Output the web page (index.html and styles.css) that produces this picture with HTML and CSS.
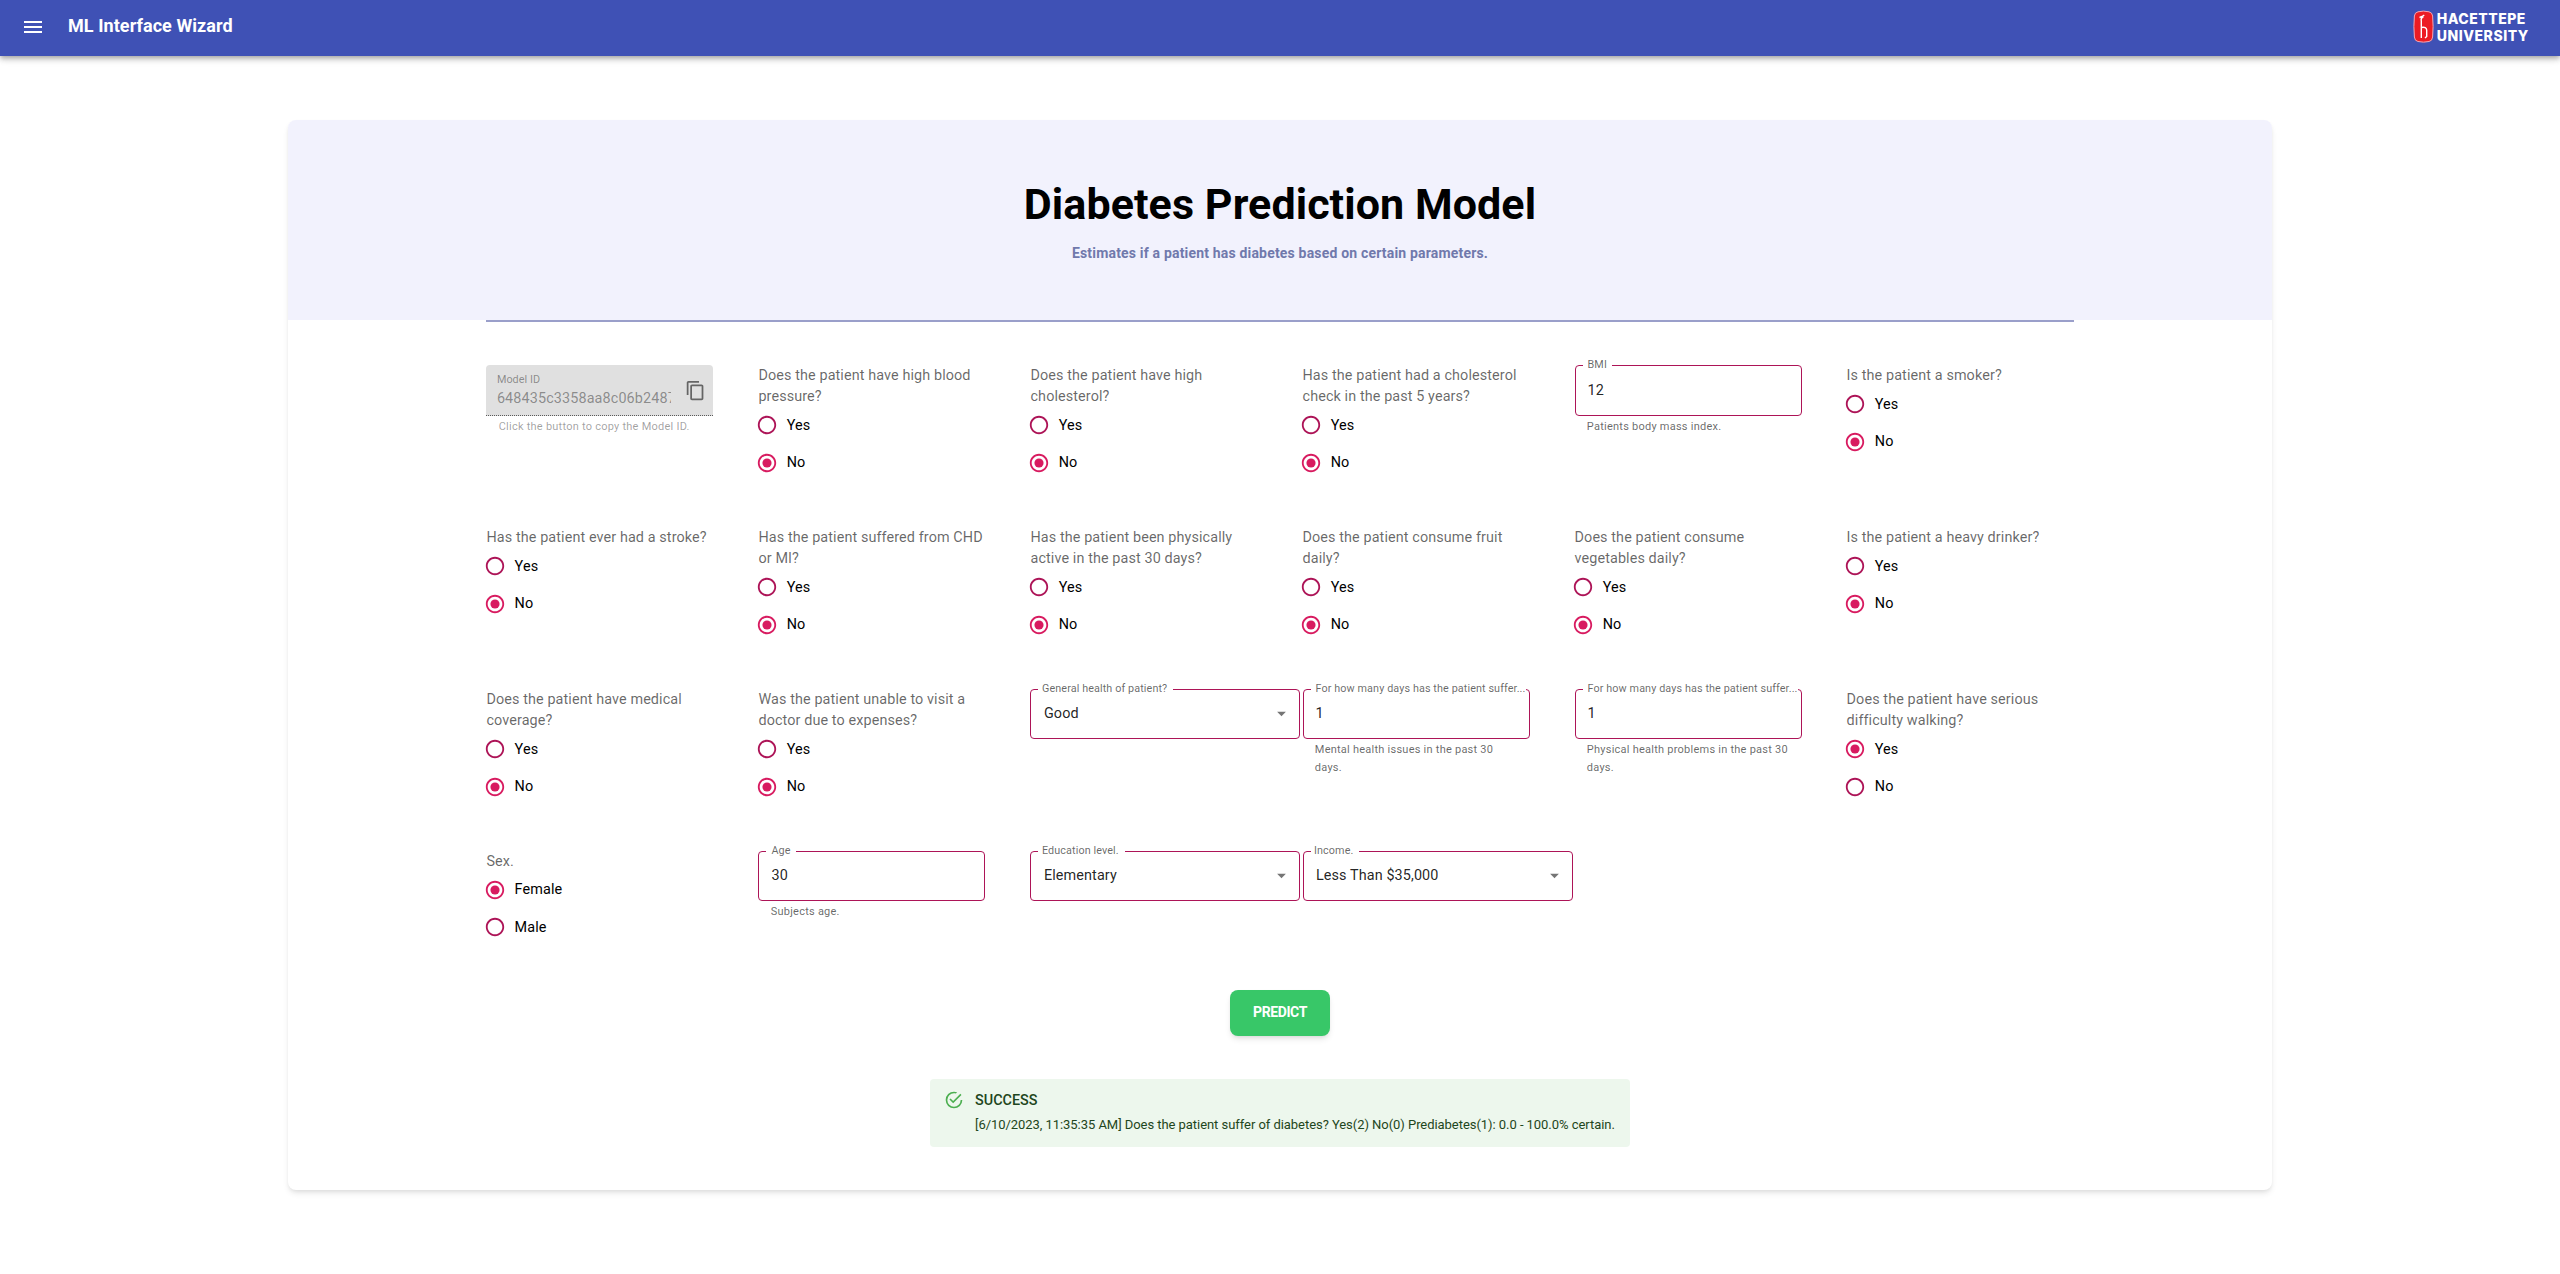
FILE: index.html
```
<!DOCTYPE html>
<html lang="en">
<head>
<meta charset="utf-8">
<title>ML Interface Wizard</title>
<link rel="stylesheet" href="styles.css">
</head>
<body>
<svg class="defs" width="0" height="0">
  <symbol id="radio-off" viewBox="0 0 24 24"><path d="M12 2C6.48 2 2 6.48 2 12s4.48 10 10 10 10-4.48 10-10S17.52 2 12 2zm0 18c-4.42 0-8-3.58-8-8s3.58-8 8-8 8 3.58 8 8-3.58 8-8 8z"/></symbol>
  <symbol id="radio-on" viewBox="0 0 24 24"><path d="M12 2C6.48 2 2 6.48 2 12s4.48 10 10 10 10-4.48 10-10S17.52 2 12 2zm0 18c-4.42 0-8-3.58-8-8s3.58-8 8-8 8 3.58 8 8-3.58 8-8 8z"/><circle cx="12" cy="12" r="5"/></symbol>
  <symbol id="arrow" viewBox="0 0 24 24"><path d="M7 10l5 5 5-5z"/></symbol>
</svg>
<header class="appbar">
  <svg class="menu" viewBox="0 0 24 24"><path d="M3 18h18v-2H3v2zm0-5h18v-2H3v2zm0-7v2h18V6H3z"/></svg>
  <h1 class="brand">ML Interface Wizard</h1>
  <svg class="logo" viewBox="0 0 118 34">
    <path class="badge" d="M5 1.8Q10.500 .4 16 1.800Q19.300 2.500 19.600 6Q20.600 16.500 19.600 27Q19.300 31 16 31.500Q10.500 32.800 5 31.500Q1.700 31 1.400 27Q.4 16.500 1.400 6Q1.700 2.500 5 1.800z"/>
    <path class="deer" d="M6.500 7.500L9 6.500L11.300 5M10.500 6.500Q7.500 8 8.300 11V28M8.300 17.500Q13.500 16.500 13.700 20V26.500L12 28"/>
    <text class="logo-text" x="23.800" y="13.700" textLength="88.500">HACETTEPE</text>
    <text class="logo-text" x="23.800" y="30.700" textLength="91.500">UNIVERSITY</text>
  </svg>
</header>
<main class="card">
  <div class="hero">
    <h2 class="title">Diabetes Prediction Model</h2>
    <p class="subtitle">Estimates if a patient has diabetes based on certain parameters.</p>
  </div>
  <div class="divider"></div>
  <form class="grid">
    <div class="cell">
      <div class="filled">
        <div class="filled-text"><span class="filled-label">Model ID</span><span class="filled-value">648435c3358aa8c06b2487</span></div>
        <svg class="copy" viewBox="0 0 24 24"><path d="M16 1H4c-1.100 0-2 .9-2 2v14h2V3h12V1zm3 4H8c-1.100 0-2 .9-2 2v14c0 1.100.9 2 2 2h11c1.100 0 2-.9 2-2V7c0-1.100-.9-2-2-2zm0 16H8V7h11v14z"/></svg>
      </div>
      <p class="helper muted">Click the button to copy the Model ID.</p>
    </div>
    <div class="cell"><p class="question">Does the patient have high blood pressure?</p><label class="option"><svg><use href="#radio-off"/></svg>Yes</label><label class="option on"><svg><use href="#radio-on"/></svg>No</label></div>
    <div class="cell"><p class="question">Does the patient have high cholesterol?</p><label class="option"><svg><use href="#radio-off"/></svg>Yes</label><label class="option on"><svg><use href="#radio-on"/></svg>No</label></div>
    <div class="cell"><p class="question">Has the patient had a cholesterol check in the past 5 years?</p><label class="option"><svg><use href="#radio-off"/></svg>Yes</label><label class="option on"><svg><use href="#radio-on"/></svg>No</label></div>
    <div class="cell"><div class="field"><span class="legend">BMI</span><span class="value">12</span></div><p class="helper">Patients body mass index.</p></div>
    <div class="cell"><p class="question">Is the patient a smoker?</p><label class="option"><svg><use href="#radio-off"/></svg>Yes</label><label class="option on"><svg><use href="#radio-on"/></svg>No</label></div>

    <div class="cell"><p class="question">Has the patient ever had a stroke?</p><label class="option"><svg><use href="#radio-off"/></svg>Yes</label><label class="option on"><svg><use href="#radio-on"/></svg>No</label></div>
    <div class="cell"><p class="question">Has the patient suffered from CHD or MI?</p><label class="option"><svg><use href="#radio-off"/></svg>Yes</label><label class="option on"><svg><use href="#radio-on"/></svg>No</label></div>
    <div class="cell"><p class="question">Has the patient been physically active in the past 30 days?</p><label class="option"><svg><use href="#radio-off"/></svg>Yes</label><label class="option on"><svg><use href="#radio-on"/></svg>No</label></div>
    <div class="cell"><p class="question">Does the patient consume fruit daily?</p><label class="option"><svg><use href="#radio-off"/></svg>Yes</label><label class="option on"><svg><use href="#radio-on"/></svg>No</label></div>
    <div class="cell"><p class="question">Does the patient consume vegetables daily?</p><label class="option"><svg><use href="#radio-off"/></svg>Yes</label><label class="option on"><svg><use href="#radio-on"/></svg>No</label></div>
    <div class="cell"><p class="question">Is the patient a heavy drinker?</p><label class="option"><svg><use href="#radio-off"/></svg>Yes</label><label class="option on"><svg><use href="#radio-on"/></svg>No</label></div>

    <div class="cell"><p class="question">Does the patient have medical coverage?</p><label class="option"><svg><use href="#radio-off"/></svg>Yes</label><label class="option on"><svg><use href="#radio-on"/></svg>No</label></div>
    <div class="cell"><p class="question">Was the patient unable to visit a doctor due to expenses?</p><label class="option"><svg><use href="#radio-off"/></svg>Yes</label><label class="option on"><svg><use href="#radio-on"/></svg>No</label></div>
    <div class="cell"><div class="field select"><span class="legend">General health of patient?</span><span class="value">Good</span><svg class="caret"><use href="#arrow"/></svg></div></div>
    <div class="cell"><div class="field"><span class="legend long">For how many days has the patient suffer...</span><span class="value">1</span></div><p class="helper">Mental health issues in the past 30 days.</p></div>
    <div class="cell"><div class="field"><span class="legend long">For how many days has the patient suffer...</span><span class="value">1</span></div><p class="helper">Physical health problems in the past 30 days.</p></div>
    <div class="cell"><p class="question">Does the patient have serious difficulty walking?</p><label class="option on"><svg><use href="#radio-on"/></svg>Yes</label><label class="option"><svg><use href="#radio-off"/></svg>No</label></div>

    <div class="cell"><p class="question">Sex.</p><label class="option on"><svg><use href="#radio-on"/></svg>Female</label><label class="option"><svg><use href="#radio-off"/></svg>Male</label></div>
    <div class="cell"><div class="field"><span class="legend">Age</span><span class="value">30</span></div><p class="helper">Subjects age.</p></div>
    <div class="cell"><div class="field select"><span class="legend">Education level.</span><span class="value">Elementary</span><svg class="caret"><use href="#arrow"/></svg></div></div>
    <div class="cell"><div class="field select"><span class="legend">Income.</span><span class="value">Less Than $35,000</span><svg class="caret"><use href="#arrow"/></svg></div></div>
  </form>
  <button class="predict" type="button">PREDICT</button>
  <div class="alert">
    <svg class="alert-icon" viewBox="0 0 24 24"><path d="M20,12A8,8 0 0,1 12,20A8,8 0 0,1 4,12A8,8 0 0,1 12,4C12.760,4 13.500,4.110 14.200,4.310L15.770,2.740C14.610,2.260 13.340,2 12,2A10,10 0 0,0 2,12A10,10 0 0,0 12,22A10,10 0 0,0 22,12M7.910,10.080L6.500,11.500L11,16L21,6L19.590,4.580L11,13.170L7.910,10.080Z"/></svg>
    <div>
      <p class="alert-title">SUCCESS</p>
      <p class="alert-text">[6/10/2023, 11:35:35 AM] Does the patient suffer of diabetes? Yes(2) No(0) Prediabetes(1): 0.0 - 100.0% certain.</p>
    </div>
  </div>
</main>
</body>
</html>
```
FILE: styles.css
```
* { box-sizing: border-box; }
body, h1, h2, p { margin: 0; }
body {
  min-height: 1274px;
  background: #fff;
  font: 14.400px/21px Roboto, sans-serif;
  letter-spacing: .1px;
  color: #000;
}
svg { display: block; fill: currentColor; flex: none; }
.defs { position: absolute; }

.appbar {
  display: flex;
  align-items: center;
  height: 56px;
  padding: 0 29px 2px 20.500px;
  background: #3f51b5;
  color: #fff;
  box-shadow: 0 2px 4px -1px rgba(0,0,0,.2), 0 4px 5px rgba(0,0,0,.14), 0 1px 10px rgba(0,0,0,.12);
}
.menu { width: 24px; height: 24px; }
.brand { margin: 0 auto 3px 23.500px; font-size: 18px; font-weight: 700; letter-spacing: .07px; }
.logo { width: 118px; height: 34px; }
.badge { fill: #ec1c24; stroke: #f4a6b4; stroke-width: 1; }
.deer { fill: none; stroke: #fff; stroke-width: 1.4; }
.logo-text { font: 800 14px Inter, sans-serif; letter-spacing: 0; }

.card {
  display: flex;
  flex-direction: column;
  align-items: center;
  width: 1984px;
  height: 1070px;
  margin: 64px auto 0;
  border-radius: 8px;
  background: #fff;
  box-shadow: 0 4px 6px -1px rgba(0,0,0,.1), 0 2px 4px -1px rgba(0,0,0,.06);
}
.hero {
  width: 100%;
  height: 200px;
  padding-top: 58px;
  border-radius: 8px 8px 0 0;
  background: #f2f2fd;
  text-align: center;
}
.title { font-size: 43px; line-height: 52px; font-weight: 700; letter-spacing: .08px; }
.subtitle { margin-top: 13px; font-size: 14px; font-weight: 700; letter-spacing: .18px; color: #7079ac; }
.divider { width: 1588px; height: 2px; background: #9a9fca; }

.grid {
  display: grid;
  grid-template-columns: repeat(6, minmax(0, 1fr));
  grid-auto-rows: 116.800px;
  gap: 45px;
  width: 1587.200px;
  margin-top: 43.200px;
}
.question { color: rgba(0,0,0,.6); }
.option {
  display: flex;
  align-items: center;
  gap: 8.500px;
  height: 37.500px;
  margin-left: -2.300px;
  position: relative;
  top: -.5px;
}
.option svg { width: 22px; height: 22px; color: #ad1457; }
.option.on svg { color: #d81b60; }

.field {
  position: relative;
  display: flex;
  align-items: center;
  height: 50.400px;
  padding: 0 7px 0 12px;
  border: 1px solid #ad1457;
  border-radius: 4px;
  color: rgba(0,0,0,.87);
}
.select { width: 270px; justify-content: space-between; padding-left: 12.500px; }
.caret { width: 21px; height: 21px; color: rgba(0,0,0,.54); }
/* Label sits over the outline and cuts it */
.legend {
  position: absolute;
  top: -10px;
  left: 7px;
  padding: 0 5px;
  background: #fff;
  font-size: 10.800px;
  line-height: 18px;
  letter-spacing: .1px;
  white-space: nowrap;
  color: rgba(0,0,0,.6);
}
.select .legend { padding: 0 6px 0 3.500px; }
.legend.long { padding-right: 0; }
.helper {
  padding: 2.300px 12px 0 12.300px;
  font-size: 11px;
  line-height: 18px;
  letter-spacing: .24px;
  color: rgba(0,0,0,.6);
}
.helper.muted { padding-top: 1.700px; color: rgba(0,0,0,.38); }

.filled {
  display: flex;
  align-items: center;
  justify-content: space-between;
  height: 51px;
  padding: 0 7px 0 10.500px;
  border-bottom: 1px dotted rgba(0,0,0,.6);
  border-radius: 4px 4px 0 0;
  background: #e0e0e0;
  color: rgba(0,0,0,.4);
}
.filled-text { display: flex; flex-direction: column; width: 174px; overflow: hidden; padding-top: 1px; }
.filled-label { font-size: 10.800px; line-height: 16px; letter-spacing: .05px; }
.filled-value { letter-spacing: .12px; white-space: nowrap; }
.copy { width: 21px; height: 21px; color: rgba(0,0,0,.55); }

.predict {
  width: 100px;
  height: 46px;
  margin-top: 22.600px;
  padding: 0 0 2px;
  border: 0;
  border-radius: 8px;
  background: #38c768;
  box-shadow: 0 4px 6px -1px rgba(0,0,0,.1), 0 2px 4px -2px rgba(0,0,0,.1);
  font: 700 14px Roboto, sans-serif;
  letter-spacing: -.4px;
  color: #fff;
}
.alert {
  display: flex;
  gap: 11px;
  width: 700px;
  height: 68px;
  margin-top: 43px;
  padding: 11px 14px;
  border-radius: 4px;
  background: #edf7ed;
  color: #1e4620;
}
.alert-icon { width: 20px; height: 20px; color: #4caf50; }
.alert-title { font-weight: 500; letter-spacing: 0; }
.alert-text { margin-top: 3px; font-size: 13px; letter-spacing: -.05px; white-space: nowrap; }
```
